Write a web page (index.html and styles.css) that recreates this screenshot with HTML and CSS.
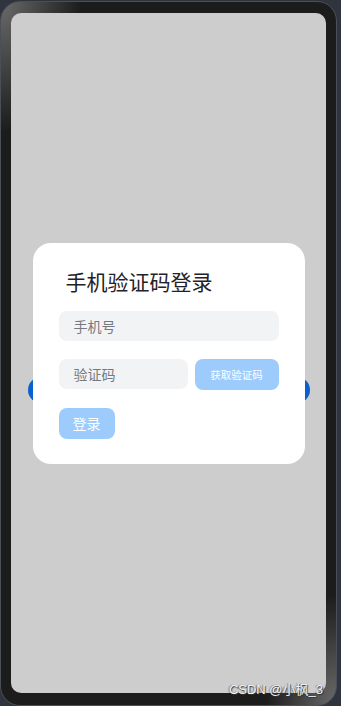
FILE: index.html
```html
<!DOCTYPE html>
<html lang="zh">
<head>
<meta charset="utf-8">
<title>手机验证码登录</title>
<link rel="stylesheet" href="styles.css">
</head>
<body>
<div class="phone">
  <div class="screen">
    <div class="page-btn"></div>
    <div class="dialog">
      <h1 class="title">手机验证码登录</h1>
      <div class="field">手机号</div>
      <div class="code-row">
        <div class="field code-field">验证码</div>
        <div class="code-btn">获取验证码</div>
      </div>
      <div class="login-btn">登录</div>
    </div>
  </div>
  <div class="watermark">CSDN @小枫_3</div>
</div>
</body>
</html>
```
FILE: styles.css
```css
* { box-sizing: border-box; }
html, body {
  margin: 0;
  padding: 0;
  background: #2f343e;
  width: 341px;
  height: 706px;
  overflow: hidden;
  font-family: "Noto Sans CJK SC", "Noto Sans", sans-serif;
}
body {
  padding-top: 1px;
}
.phone {
  position: relative;
  width: 337px;
  height: 705px;
  border-radius: 20px;
  border: 1px solid #4b4f57;
  background:
    radial-gradient(ellipse 80px 130px at 0 0, #6a6a6a 0%, rgba(28,28,28,0) 100%),
    radial-gradient(ellipse 70px 110px at 100% 100%, #6a6a6a 0%, rgba(28,28,28,0) 100%),
    #1c1c1c;
  padding: 11px 10px 11px 10px;
}
.screen {
  height: 680px;
  background: #cdcdcd;
  border-radius: 10px;
  display: grid;
}
.page-btn {
  grid-area: 1 / 1;
  justify-self: center;
  align-self: start;
  margin-top: 364px;
  width: 282px;
  height: 26px;
  border-radius: 13px;
  background: #0a60cc;
}
.dialog {
  grid-area: 1 / 1;
  place-self: center;
  width: 272px;
  height: 221px;
  background: #fff;
  border-radius: 18px;
  padding: 26px 26px 25px;
  display: flex;
  flex-direction: column;
}
.title {
  margin: 0 0 18px 7px;
  font-size: 21px;
  line-height: 24px;
  font-weight: 400;
  color: #1f2329;
}
.field {
  height: 30px;
  border-radius: 8px;
  background: #f2f3f5;
  color: #76797e;
  font-size: 14px;
  line-height: 30px;
  padding-left: 15px;
}
.code-row {
  margin-top: 18px;
  display: flex;
  align-items: center;
  gap: 7px;
}
.code-field {
  width: 129px;
}
.code-btn {
  width: 84px;
  height: 31px;
  border-radius: 8px;
  background: #9dcbfb;
  color: #fff;
  font-size: 10.5px;
  line-height: 31px;
  text-align: center;
}
.login-btn {
  margin-top: 18px;
  width: 56px;
  height: 31px;
  border-radius: 8px;
  background: #9dcbfb;
  color: #fff;
  font-size: 14px;
  line-height: 31px;
  text-align: center;
}
.watermark {
  position: absolute;
  right: 13px;
  bottom: 7px;
  font-family: "Liberation Sans", "Noto Sans CJK SC", sans-serif;
  font-size: 13px;
  line-height: 16px;
  color: #f2f2f2;
  text-shadow: 1px 1px 1px #333, -1px 0 1px rgba(0,0,0,0.4);
}
```
